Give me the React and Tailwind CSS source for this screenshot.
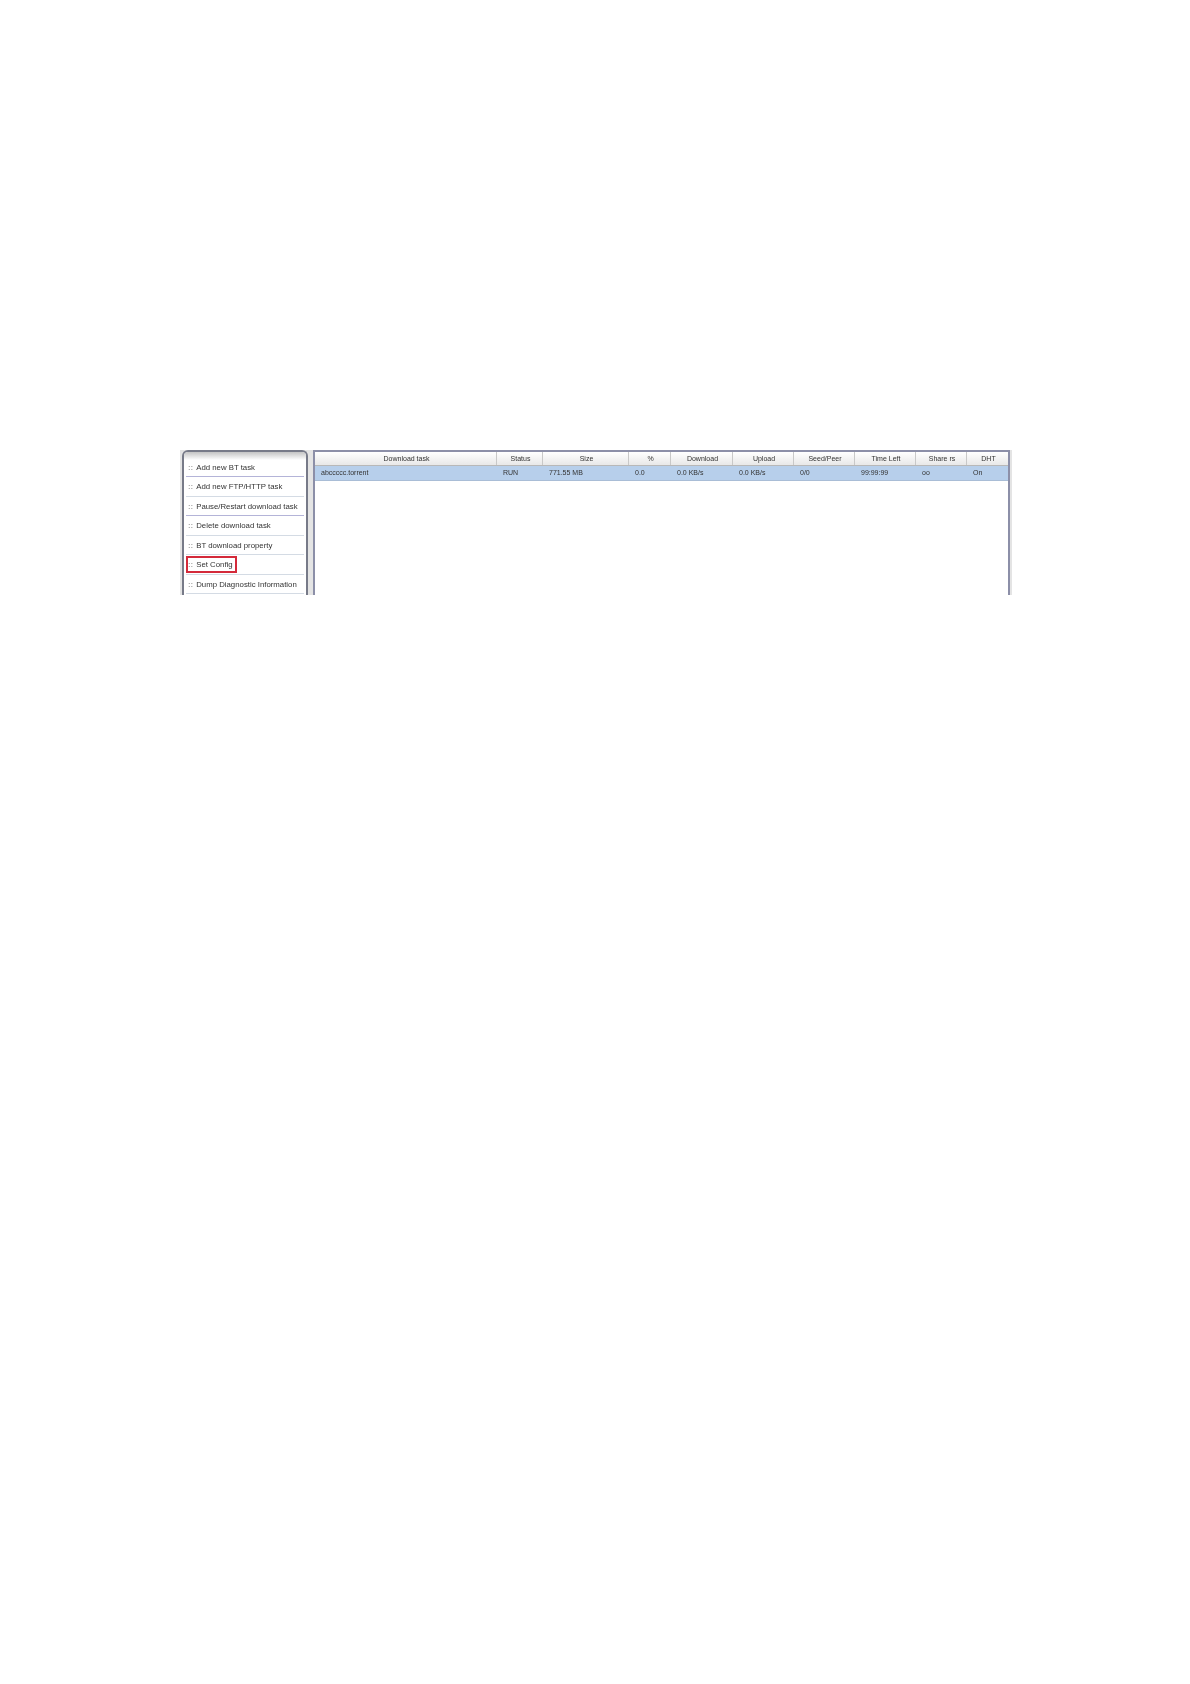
const menu = [
  'Add new BT task',
  'Add new FTP/HTTP task',
  'Pause/Restart download task',
  'Delete download task',
  'BT download property',
  'Set Config',
  'Dump Diagnostic Information',
];

const columns = [
  { label: 'Download task', width: 'w-[182px]', value: 'abccccc.torrent' },
  { label: 'Status', width: 'w-[46px]', value: 'RUN' },
  { label: 'Size', width: 'w-[86px]', value: '771.55 MB' },
  { label: '%', width: 'w-[42px]', value: '0.0' },
  { label: 'Download', width: 'w-[62px]', value: '0.0 KB/s' },
  { label: 'Upload', width: 'w-[61px]', value: '0.0 KB/s' },
  { label: 'Seed/Peer', width: 'w-[61px]', value: '0/0' },
  { label: 'Time Left', width: 'w-[61px]', value: '99:99:99' },
  { label: 'Share rs', width: 'w-[51px]', value: 'oo' },
  { label: 'DHT', width: 'w-[41px]', value: 'On' },
];

function MenuItem({ label, boxed, tinted }) {
  return (
    <li className={`relative h-[19.5px] border-b pl-[2px] leading-[19px] whitespace-nowrap ${tinted ? 'border-[#b4b4d8]' : 'border-[#d4dbe4]'}`}>
      <span className="mr-[3px] font-bold text-[#a8a8a8]">::</span>
      {label}
      {boxed && <span className="absolute left-0 top-[1px] h-[17px] w-[51px] border-2 border-[#d42a3a]" />}
    </li>
  );
}

export default function App() {
  return (
    <div className="h-[1684px] w-[1190px] bg-white pl-[180px] pt-[450px] font-['Liberation_Sans',Arial,sans-serif] text-[7.8px] text-[#333333]">
      <div className="flex h-[145px] w-[832px] overflow-hidden bg-[#e4e4e4] pr-[2px] blur-[0.4px]">
        <div className="ml-[2px] h-full w-[126px] overflow-hidden rounded-t-[6px] border-x-2 border-t-2 border-[#777a88] bg-white">
          <div className="h-[8px] bg-gradient-to-b from-[#c4c4c4] to-white" />
          <ul className="mx-[2px] mt-[-2.5px] list-none">
            {menu.map((label, i) => (
              <MenuItem key={label} label={label} boxed={label === 'Set Config'} tinted={i === 0 || i === 2} />
            ))}
          </ul>
        </div>
        <div className="ml-[5px] h-full flex-1 border-x-2 border-t-2 border-[#8c8fa8] bg-white text-[7px]">
          <div className="flex h-[14px] border-b border-[#b8b8b8] bg-gradient-to-b from-white to-[#e8e8e8] leading-[13px]">
            {columns.map(col => (
              <div key={col.label} className={`${col.width} shrink-0 border-r border-[#c8c8c8] pl-[2px] text-center last:border-r-0`}>
                {col.label}
              </div>
            ))}
          </div>
          <div className="flex h-[15px] border-b border-[#a9bdd6] bg-[#b7cfeb] leading-[14px]">
            {columns.map(col => (
              <div key={col.label} className={`${col.width} shrink-0 pl-[6px]`}>
                {col.value}
              </div>
            ))}
          </div>
        </div>
      </div>
    </div>
  );
}
